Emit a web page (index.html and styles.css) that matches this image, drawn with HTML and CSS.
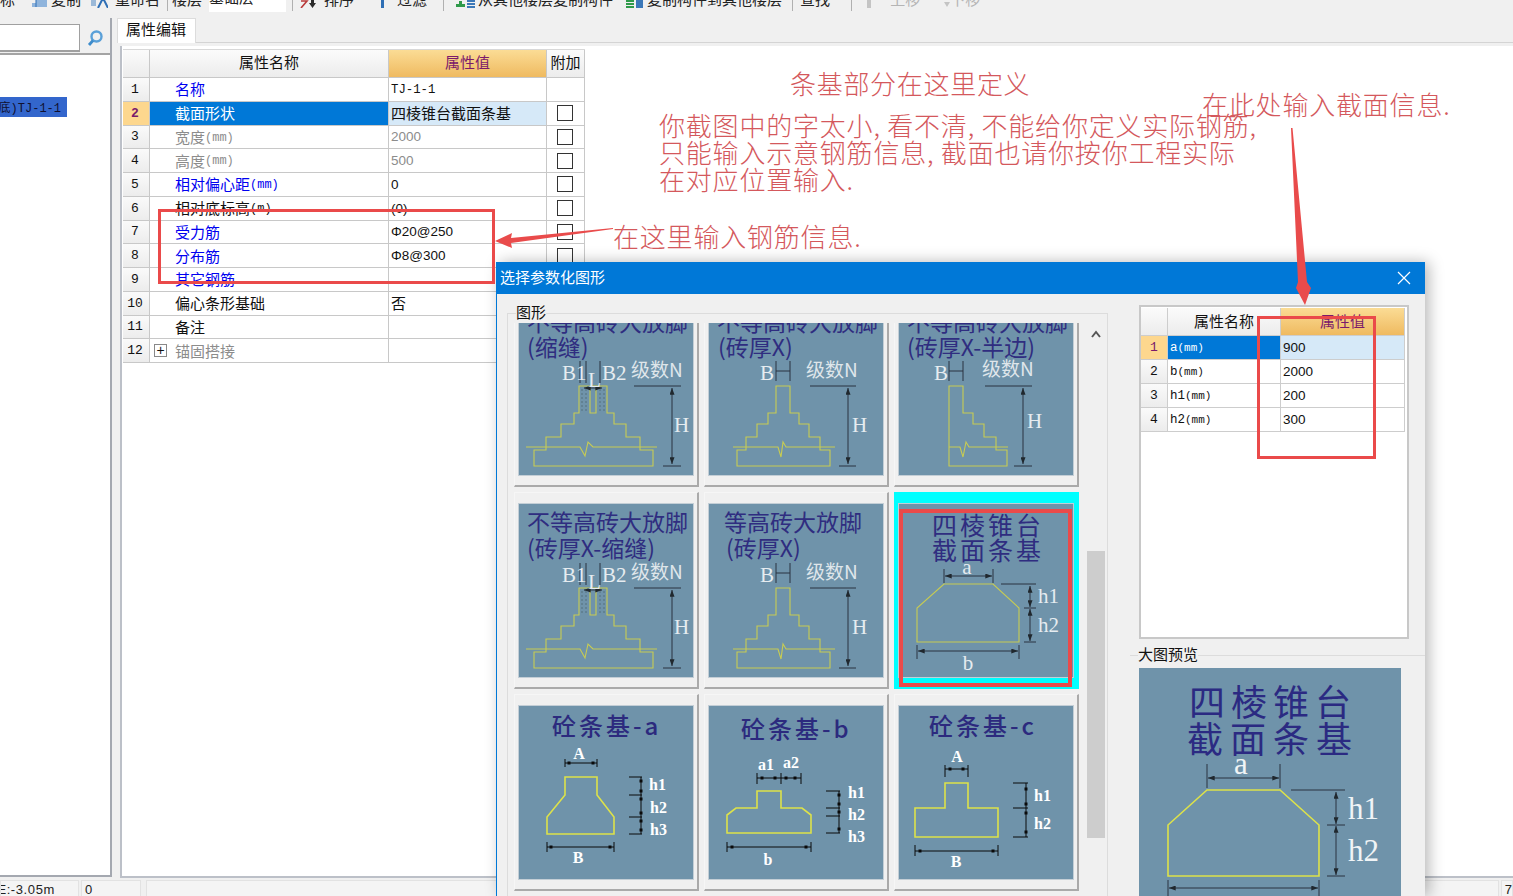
FILE: index.html
```html
<!DOCTYPE html>
<html lang="zh">
<head>
<meta charset="utf-8">
<title>属性编辑</title>
<link rel="stylesheet" href="styles.css">
</head>
<body>
<svg class="defs" width="0" height="0" aria-hidden="true">
  <defs>
    <marker id="ar" viewBox="0 0 8 6" refX="8" refY="3" markerWidth="7" markerHeight="5" orient="auto-start-reverse"><path d="M0 0L8 3L0 6Z" fill="#20282e"/></marker>
    <g id="stairs-a">
      <path class="ln" d="M16 149H28V136H43V123H56V112H61V85H89V112H96V123H108V136H122V149H135V165H16Z"/>
      <path class="ln" d="M8 146H62L67 155L70 141L75 146H139"/>
      <path class="ln" d="M72 85V112H78V85"/>
      <path class="dash" d="M64 88V112M68 88V112M82 88V112M86 88V112"/>
      <path class="dim" d="M116 85H163M145 165H163"/>
      <path class="dim" marker-start="url(#ar)" marker-end="url(#ar)" d="M154 87V163"/>
      <path class="dim" d="M62 60V82M68 60V82M82 60V82" />
      <path class="dim" marker-start="url(#ar)" marker-end="url(#ar)" d="M66 87H84"/>
    </g>
    <g id="stairs-b">
      <path class="ln" d="M29 149H38V136H49V123H60V112H68V85H82V112H91V123H101V136H112V149H122V165H29Z"/>
      <path class="ln" d="M25 146H70L73 156L75 141L78 146H127"/>
      <path class="dim" d="M102 85H148M131 165H148M68 60V80M82 60V80M68 70H82"/>
      <path class="dim" marker-start="url(#ar)" marker-end="url(#ar)" d="M140 87V163"/>
    </g>
  </defs>
</svg>

<header class="toolbar">
  <div class="tools">
    <span class="tool t1">标</span>
    <span class="tool t2"><svg class="ico i15" viewBox="0 0 15 8"><path d="M0 3H4V0H15V7H0Z" fill="#8fb4dc"/><path d="M4 0V7" stroke="#2f6fb5"/></svg>复制</span>
    <span class="tool t3"><svg class="ico i18" viewBox="0 0 18 8"><path d="M8 8L12 0H14L18 8" fill="none" stroke="#2f6fb5" stroke-width="2"/><path d="M1 0H6V6H1Z" fill="#9bb9d8"/></svg>重命名</span>
    <span class="sep s4"></span>
    <span class="tool t4">楼层</span>
    <span class="tool floor">基础层</span>
    <span class="sep s8"></span>
    <span class="tool t5"><svg class="ico i16" viewBox="0 0 16 8"><path d="M1 1H7L1 8" fill="none" stroke="#b83a3a" stroke-width="1.6"/><path d="M11 0H14V3H16L12.5 8L9 3H11Z" fill="#2b2b2b"/></svg>排序</span>
    <span class="tool t6"><svg class="ico i7" viewBox="0 0 7 8"><path d="M2 0H5V8H2Z" fill="#2f6fb5"/></svg>过滤</span>
    <span class="sep s12"></span>
    <span class="tool t7"><svg class="ico i19" viewBox="0 0 19 8"><path d="M0 4H3V1H6V4H9V7H0Z" fill="#2f9a4a"/><path d="M11 0H19V2H11ZM11 3H19V5H11ZM11 6H19V8H11Z" fill="#3c78b8"/></svg>从其他楼层复制构件</span>
    <span class="tool t8"><svg class="ico i17" viewBox="0 0 17 8"><path d="M0 0H8V2H0ZM0 3H8V5H0ZM0 6H8V8H0Z" fill="#2f9a4a"/><path d="M10 0H17V8H10Z" fill="#3c78b8"/></svg>复制构件到其他楼层</span>
    <span class="sep s7"></span>
    <span class="tool t9">查找</span>
    <span class="sep s12"></span>
    <span class="tool t10"><svg class="ico i10" viewBox="0 0 10 8"><path d="M3 0H7V8H3Z" fill="#c4c4c4"/></svg>上移</span>
    <span class="tool t11"><svg class="ico i6" viewBox="0 0 6 8"><path d="M0 2H6L3 7Z" fill="#c4c4c4"/></svg>下移</span>
  </div>
</header>

<main class="main">
  <aside class="left">
    <div class="search">
      <div class="search-input"></div>
      <svg class="search-icon" viewBox="0 0 18 18" width="18" height="18"><circle cx="10.5" cy="7.5" r="5" fill="none" stroke="#5aa0d8" stroke-width="2.4"/><path d="M7 11.5L3 16" stroke="#3d8ccc" stroke-width="2.8"/></svg>
    </div>
    <div class="tree"><div class="tree-sel"><span>(底)TJ-1-1</span></div></div>
  </aside>

  <section class="right">
    <div class="tabs"><div class="tab">属性编辑</div></div>
    <div class="panel">
      <div class="grid">
        <div class="c h"></div><div class="c h ctr">属性名称</div><div class="c h active">属性值</div><div class="c h ctr">附加</div>

        <div class="c n">1</div><div class="c name blue">名称</div><div class="c val mono">TJ-1-1</div><div class="c"></div>
        <div class="c n on">2</div><div class="c name sel">截面形状</div><div class="c val selv">四棱锥台截面条基</div><div class="c chk"><i></i></div>
        <div class="c n">3</div><div class="c name gray">宽度<small>(mm)</small></div><div class="c val gray">2000</div><div class="c chk"><i></i></div>
        <div class="c n">4</div><div class="c name gray">高度<small>(mm)</small></div><div class="c val gray">500</div><div class="c chk"><i></i></div>
        <div class="c n">5</div><div class="c name blue">相对偏心距<small>(mm)</small></div><div class="c val">0</div><div class="c chk"><i></i></div>
        <div class="c n">6</div><div class="c name">相对底标高<small>(m)</small></div><div class="c val">(0)</div><div class="c chk"><i></i></div>
        <div class="c n">7</div><div class="c name blue">受力筋</div><div class="c val">Φ20@250</div><div class="c chk"><i></i></div>
        <div class="c n">8</div><div class="c name blue">分布筋</div><div class="c val">Φ8@300</div><div class="c chk"><i></i></div>
        <div class="c n">9</div><div class="c name blue">其它钢筋</div><div class="c val"></div><div class="c chk"><i></i></div>
        <div class="c n">10</div><div class="c name">偏心条形基础</div><div class="c val cj">否</div><div class="c chk"><i></i></div>
        <div class="c n">11</div><div class="c name">备注</div><div class="c val"></div><div class="c"></div>
        <div class="c n">12</div><div class="c name gray exp"><b>+</b>锚固搭接</div><div class="c val"></div><div class="c"></div>
      </div>
    </div>
  </section>
</main>

<footer class="status">
  <div class="st st1"><span>E:-3.05m</span></div>
  <div class="st st2">0</div>
  <div class="st st3"></div>
  <div class="st st4">7</div>
</footer>

<section class="dialog">
  <div class="dlg-title"><span>选择参数化图形</span>
    <svg class="close" viewBox="0 0 14 14" width="14" height="14"><path d="M1 1L13 13M13 1L1 13" stroke="#fff" stroke-width="1.2"/></svg>
  </div>
  <div class="dlg-body">
    <div class="dlg-left">
      <div class="group">
        <div class="group-label">图形</div>
        <div class="pane">
          <div class="viewport">
            <div class="thumbs">
              <div class="cell"><svg class="img" viewBox="0 0 176 175">
                <text class="tt" x="9" y="30">不等高砖大放脚</text><text class="tt" x="9" y="55">(缩缝)</text>
                <use href="#stairs-a"/>
                <text class="dt" x="44" y="79">B1</text><text class="dt" x="84" y="79">B2</text><text class="dn" x="113" y="76">级数N</text><text class="dt" x="70" y="86">L</text><text class="dt" x="156" y="131">H</text>
              </svg></div>
              <div class="cell"><svg class="img" viewBox="0 0 176 175">
                <text class="tt" x="9" y="30">不等高砖大放脚</text><text class="tt" x="10" y="55">(砖厚X)</text>
                <use href="#stairs-b"/>
                <text class="dt" x="52" y="79">B</text><text class="dn" x="98" y="76">级数N</text><text class="dt" x="144" y="131">H</text>
              </svg></div>
              <div class="cell"><svg class="img" viewBox="0 0 176 175">
                <text class="tt" x="9" y="30">不等高砖大放脚</text><text class="tt" x="9" y="55">(砖厚X-半边)</text>
                <path class="ln" d="M51 85H65V112H75V123H86V136H98V149H109V165H51Z"/>
                <path class="ln" d="M51 146H62L65 156L68 141L71 146H110"/>
                <path class="dim" d="M87 85H134M116 165H134M51 60V80M65 60V80M51 70H65"/>
                <path class="dim" marker-start="url(#ar)" marker-end="url(#ar)" d="M125 87V163"/>
                <text class="dt" x="36" y="79">B</text><text class="dn" x="84" y="75">级数N</text><text class="dt" x="129" y="127">H</text>
              </svg></div>

              <div class="cell"><svg class="img" viewBox="0 0 176 175">
                <text class="tt" x="9" y="28">不等高砖大放脚</text><text class="tt" x="9" y="54">(砖厚X-缩缝)</text>
                <use href="#stairs-a"/>
                <text class="dt" x="44" y="79">B1</text><text class="dt" x="84" y="79">B2</text><text class="dn" x="113" y="76">级数N</text><text class="dt" x="70" y="86">L</text><text class="dt" x="156" y="131">H</text>
              </svg></div>
              <div class="cell"><svg class="img" viewBox="0 0 176 175">
                <text class="tt" x="16" y="28">等高砖大放脚</text><text class="tt" x="18" y="54">(砖厚X)</text>
                <use href="#stairs-b"/>
                <text class="dt" x="52" y="79">B</text><text class="dn" x="98" y="76">级数N</text><text class="dt" x="144" y="131">H</text>
              </svg></div>
              <div class="cell cell-on"><svg class="img" viewBox="0 0 176 175">
                <text class="tt tt-sp" x="90" y="32">四棱锥台</text><text class="tt tt-sp" x="90" y="57">截面条基</text>
                <path class="ln" d="M46 81H95L121 105V139H19V105Z"/>
                <path class="dim" d="M46 66V80M95 66V80M103 81H138M126 105H138M126 139H138M19 142V156M121 142V156"/>
                <path class="dim" marker-start="url(#ar)" marker-end="url(#ar)" d="M47 73H94"/>
                <path class="dim" marker-start="url(#ar)" marker-end="url(#ar)" d="M20 148H120"/>
                <path class="dim" marker-start="url(#ar)" marker-end="url(#ar)" d="M132 83V104"/>
                <path class="dim" marker-start="url(#ar)" marker-end="url(#ar)" d="M132 106V138"/>
                <text class="dt mid" x="69" y="71">a</text><text class="dt mid" x="70" y="167">b</text><text class="dt" x="140" y="100">h1</text><text class="dt" x="140" y="129">h2</text>
              </svg></div>

              <div class="cell"><svg class="img" viewBox="0 0 176 175">
                <text class="tb" x="34" y="30">砼条基-a</text>
                <path class="ln th" d="M47 72H79V90L96 112V129H29V112L47 90Z"/>
                <path class="k" d="M47 54V62M79 54V62M47 58H79M111 72H124M111 90H124M111 112H124M111 129H124M123 72V129M29 137V147M96 137V147M29 142H96"/>
                <path class="kd" d="M51 58h0M75 58h0M123 76h0M123 86h0M123 94h0M123 108h0M123 116h0M123 125h0M33 142h0M92 142h0"/>
                <text class="bd mid" x="61" y="54">A</text><text class="bd" x="131" y="85">h1</text><text class="bd" x="132" y="108">h2</text><text class="bd" x="132" y="130">h3</text><text class="bd mid" x="60" y="158">B</text>
              </svg></div>
              <div class="cell"><svg class="img" viewBox="0 0 176 175">
                <text class="tb" x="33" y="33">砼条基-b</text>
                <path class="ln th" d="M49 86H73V103H94L103 110V128H19V110L28 103H49Z"/>
                <path class="k" d="M49 68V79M73 68V79M93 68V79M49 73H93M118 86H132M118 103H132M118 111H132M118 128H132M131 86V128M19 137V147M103 137V147M19 142H103"/>
                <path class="kd" d="M54 73h0M67 73h0M78 73h0M87 73h0M131 90h0M131 99h0M131 107h0M131 124h0M24 142h0M98 142h0"/>
                <text class="bd" x="50" y="65">a1</text><text class="bd" x="75" y="63">a2</text><text class="bd" x="140" y="93">h1</text><text class="bd" x="140" y="115">h2</text><text class="bd" x="140" y="137">h3</text><text class="bd mid" x="60" y="160">b</text>
              </svg></div>
              <div class="cell"><svg class="img" viewBox="0 0 176 175">
                <text class="tb" x="31" y="30">砼条基-c</text>
                <path class="ln th" d="M47 78H70V103H100V132H17V103H47Z"/>
                <path class="k" d="M47 60V72M70 60V72M47 64H70M115 78H130M115 103H130M115 132H130M128 78V132M17 140V151M100 140V151M17 146H100"/>
                <path class="kd" d="M52 64h0M65 64h0M128 84h0M128 99h0M128 108h0M128 127h0M22 146h0M95 146h0"/>
                <text class="bd mid" x="59" y="57">A</text><text class="bd" x="136" y="96">h1</text><text class="bd" x="136" y="124">h2</text><text class="bd mid" x="58" y="162">B</text>
              </svg></div>
            </div>
          </div>
          <div class="scroll">
            <svg class="chev" viewBox="0 0 10 8" width="10" height="8"><path d="M1 7L5 2L9 7" fill="none" stroke="#555" stroke-width="2"/></svg>
            <div class="thumb"></div>
          </div>
        </div>
      </div>
    </div>

    <div class="dlg-right">
      <div class="pgrid-wrap">
        <div class="pgrid">
          <div class="pc ph"></div><div class="pc ph pctr">属性名称</div><div class="pc ph pactive">属性值</div>
          <div class="pc pn on">1</div><div class="pc pname sel">a<small>(mm)</small></div><div class="pc pval selv">900</div>
          <div class="pc pn">2</div><div class="pc pname">b<small>(mm)</small></div><div class="pc pval">2000</div>
          <div class="pc pn">3</div><div class="pc pname">h1<small>(mm)</small></div><div class="pc pval">200</div>
          <div class="pc pn">4</div><div class="pc pname">h2<small>(mm)</small></div><div class="pc pval">300</div>
        </div>
      </div>
      <div class="preview">
        <div class="group-label lbl2">大图预览</div>
        <svg class="big" viewBox="0 0 262 240">
          <text class="pt" x="134" y="48">四棱锥台</text><text class="pt pt2" x="134" y="85">截面条基</text>
          <path class="ln th" d="M68 122H141L180 157V208H29V157Z"/>
          <path class="dim" d="M68 96V120M141 96V120M152 122H206M188 157H206M188 208H206M29 212V235M180 212V235"/>
          <path class="dim" marker-start="url(#ar)" marker-end="url(#ar)" d="M69 110H140"/>
          <path class="dim" marker-start="url(#ar)" marker-end="url(#ar)" d="M30 220H179"/>
          <path class="dim" marker-start="url(#ar)" marker-end="url(#ar)" d="M197 124V156"/>
          <path class="dim" marker-start="url(#ar)" marker-end="url(#ar)" d="M197 158V207"/>
          <text class="bt mid" x="102" y="106">a</text><text class="bt" x="209" y="151">h1</text><text class="bt" x="209" y="193">h2</text>
        </svg>
      </div>
    </div>
  </div>
</section>

<div class="note n1">条基部分在这里定义</div>
<div class="note n2">你截图中的字太小, 看不清, 不能给你定义实际钢筋,<br>只能输入示意钢筋信息, 截面也请你按你工程实际<br>在对应位置输入.</div>
<div class="note n3">在此处输入截面信息.</div>
<div class="note n4">在这里输入钢筋信息.</div>
<div class="redbox r1"></div>
<div class="redbox r2"></div>
<div class="redbox r3"></div>
<svg class="arrows" viewBox="0 0 1513 896" width="1513" height="896">
  <path d="M613 228L511 238L512 233L495 241L512 248L511 243L613 229Z"/>
  <path d="M1291 128L1292.5 128L1307 282L1311 288L1305 305L1296 288L1298 282Z"/>
</svg>
</body>
</html>
```
FILE: styles.css
```css
* { box-sizing: border-box; }
html, body { margin: 0; padding: 0; }
body {
  width: 1513px; height: 896px; overflow: hidden; position: relative;
  display: flex; flex-direction: column;
  background: #f0f0f0; color: #111;
  font: 15px/1.2 "Noto Sans CJK SC", "Liberation Sans", sans-serif;
}
small { font-size: 12px; font-family: "Liberation Mono", monospace; margin-top: 2px; }
.defs { position: absolute; }

/* toolbar */
.toolbar { height: 18px; flex: none; overflow: hidden; }
.tools { display: flex; align-items: center; height: 24px; margin-top: -13px; font-size: 15px; color: #222; }
.tool { flex: none; line-height: 22px; white-space: nowrap; display: flex; align-items: flex-start; }
.ico { flex: none; margin-top: 12px; height: 8px; }
.i15 { width: 15px; margin-right: 4px; }
.i18 { width: 18px; margin-right: 7px; }
.i16 { width: 16px; margin-right: 8px; }
.i7 { width: 7px; margin-right: 11px; }
.i19 { width: 19px; margin-right: 3px; }
.i17 { width: 17px; margin-right: 4px; }
.i10 { width: 10px; margin-right: 16px; }
.i6 { width: 6px; margin-right: 0; }
.t1 { width: 32px; }
.t2 { margin-right: 9px; }
.t3 { margin-right: 7px; }
.t4 { margin-right: 7px; }
.t5 { margin-right: 25px; }
.t6 { margin-right: 16px; }
.t7 { margin-right: 13px; }
.t8 { margin-right: 10px; }
.t9 { margin-right: 21px; }
.t10 { margin-right: 24px; color: #b4b4b4; }
.t11 { color: #b4b4b4; }
.floor { width: 77px; margin-right: 6px; background: #fff; height: 26px; }
.sep { width: 1px; height: 24px; background: #b0b0b0; flex: none; }
.s4 { margin-right: 4px; }
.s7 { margin-right: 7px; }
.s8 { margin-right: 7px; }
.s12 { margin-right: 12px; }

/* main */
.main { flex: none; height: 860px; display: flex; }
.left {
  width: 112px; flex: none; height: 859px;
  padding-top: 6px; border-right: 2px solid #a4a8b0; border-bottom: 2px solid #a4a8b0;
  display: flex; flex-direction: column;
}
.search { height: 31px; flex: none; display: flex; align-items: flex-start; background: #f0f0f0; border-bottom: 2px solid #a4a4a4; }
.search-input { width: 80px; height: 28px; background: #fff; border: 1px solid #a0a0a0; border-left: 0; border-bottom-width: 2px; }
.search-icon { margin: 5px 0 0 6px; }
.tree { flex: 1; background: #fff; padding-top: 42px; }
.tree-sel {
  width: 67px; height: 20px; background: #3366cc; overflow: hidden; display: flex; justify-content: flex-end;
  align-items: center; padding-right: 6px; font: 12px "Liberation Mono", "Noto Sans CJK SC", monospace; color: #101030; white-space: nowrap;
}
.tree-sel span { flex: none; }

.right { flex: 1; min-width: 0; padding-left: 5px; display: flex; flex-direction: column; }
.tabs { height: 25px; flex: none; border-bottom: 1px solid #d4d4d4; }
.tab {
  width: 79px; height: 25px; background: #fff; border: 1px solid #dcdcdc; border-bottom: 0;
  padding-left: 8px; line-height: 19px; font-size: 15px;
}
.panel {
  height: 832px; margin: 3px 0 0 3px; background: #fff; padding: 3px 0 0 1px;
  border-left: 2px solid #bcc0c8; border-bottom: 2px solid #bcc0c8;
}
.grid {
  display: grid; width: 462px; grid-template-columns: 27px 239px 158px 38px;
  grid-template-rows: 28px; grid-auto-rows: 23.75px; border-top: 1px solid #d8d8d8;
}
.c { border-right: 1px solid #c8c8c8; border-bottom: 1px solid #c8c8c8; display: flex; align-items: center; min-width: 0; white-space: nowrap; overflow: hidden; font-size: 15px; }
.h { background: linear-gradient(#fbfbfb, #ececec); padding-bottom: 4px; }
.ctr { justify-content: center; }
.active { background: linear-gradient(#fbdc95, #efba60); color: #7b1a6b; justify-content: center; }
.n { background: linear-gradient(#fafafa, #ececec); justify-content: center; font: 13px "Liberation Mono", monospace; padding-right: 2px; }
.on { background: #fdd78e; color: #7b1a6b; font-weight: 700; }
.name { padding-left: 25px; }
.val { padding-left: 2px; font: 13.5px "Liberation Sans", "Noto Sans CJK SC", sans-serif; }
.val.selv, .val.cj { font-size: 15px; font-family: "Noto Sans CJK SC", sans-serif; padding-bottom: 2px; }
.val.mono { font: 12.3px "Liberation Mono", monospace; padding-top: 1px; }
.blue { color: #0000f0; }
.gray { color: #8c8c8c; }
.sel { background: #0078d7; color: #fff; }
.selv { background: #d6e9f8; }
.chk { justify-content: center; padding-right: 2px; }
.chk i { width: 16px; height: 16px; border: 1px solid #333; background: #fff; display: block; }
.exp { padding-left: 4px; }
.exp b { width: 13px; height: 13px; border: 1px solid #888; color: #111; font: 400 14px/11px "Liberation Sans", sans-serif; text-align: center; margin-right: 8px; flex: none; }

/* status */
.status { height: 16px; flex: none; margin-top: 2px; display: flex; gap: 2px; overflow: hidden; font: 13px/18px "Liberation Sans", sans-serif; color: #222; }
.st { height: 20px; background: #f4f4f4; border: 1px solid #e2e2e2; white-space: nowrap; }
.st1 { width: 79px; overflow: hidden; display: flex; justify-content: flex-end; padding-right: 23px; }
.st1 span { flex: none; letter-spacing: 0.6px; }
.st2 { width: 60px; padding-left: 3px; }
.st3 { width: 1355px; margin-left: 3px; }
.st4 { flex: 1; padding-left: 3px; }

/* dialog */
.dialog {
  position: absolute; left: 496px; top: 262px; width: 929px; height: 634px; overflow: hidden;
  background: #f0f0f0; border-left: 1px solid #0078d7;
  box-shadow: 4px 0 14px rgba(0,0,0,.28);
  display: flex; flex-direction: column;
}
.dlg-title { height: 32px; flex: none; background: #0078d7; color: #fff; display: flex; align-items: center; justify-content: space-between; padding: 0 14px 3px 3px; font-size: 15px; }
.close { margin-top: 3px; }
.dlg-body { flex: 1; display: flex; min-height: 0; }
.dlg-left { width: 611px; flex: none; padding: 19px 0 0 10px; }
.group { height: 100%; border: 1px solid #dcdcdc; border-bottom: 0; }
.group-label { width: max-content; height: 18px; margin: -11px 0 2px 8px; line-height: 18px; font-size: 15px; background: #f0f0f0; color: #111; }
.pane { display: flex; height: 574px; }
.viewport { width: 571px; margin-left: 6px; height: 100%; overflow: hidden; flex: none; }
.thumbs { display: grid; grid-template-columns: repeat(3, 185px); grid-auto-rows: 197px; gap: 5px; margin-top: -33px; }
.cell { padding: 10px 0 0 3px; background: #f0f0f0; border: 1px solid #f6f6f6; border-right: 2px solid #aaa; border-bottom: 2px solid #aaa; }
.cell-on { background: #00ffff; border-color: #00ffff; }
.img { display: block; width: 176px; height: 175px; background: #6f93aa; outline: 1px solid #c3ced6; outline-offset: -1px; }
.ln { fill: none; stroke: #c8cc52; stroke-width: 1.1; }
.th { stroke: #dde24a; stroke-width: 1.6; }
.dim { fill: none; stroke: #2a3340; stroke-width: 1; }
.dash { fill: none; stroke: #55707f; stroke-width: 1; stroke-dasharray: 2 2; }
.k { fill: none; stroke: #0a0a0a; stroke-width: 1; }
.kd { fill: none; stroke: #0a0a0a; stroke-width: 3; stroke-linecap: square; }
.tt { font: 23px "Noto Sans CJK SC", sans-serif; fill: #2f2d80; }
.tt-sp { font-size: 25px; letter-spacing: 3px; text-anchor: middle; }
.tb { font: 500 24px "Noto Sans CJK SC", sans-serif; letter-spacing: 3px; fill: #2c2a7e; }
.dt { font: 21px "Liberation Serif", serif; fill: #e6ecf0; }
.dn { font: 19px "Noto Sans CJK SC", "Liberation Serif", sans-serif; fill: #dfe6ea; }
.bd { font: 700 16px "Liberation Serif", serif; fill: #fff; }
.mid { text-anchor: middle; }
.scroll { flex: none; width: 18px; margin-left: 2px; display: flex; flex-direction: column; align-items: center; }
.chev { margin-top: 7px; flex: none; }
.thumb { width: 18px; height: 287px; margin-top: 213px; background: #cdcdcd; flex: none; }

.dlg-right { flex: 1; min-width: 0; padding: 11px 0 0 22px; }
.pgrid-wrap { width: 270px; height: 334px; margin-left: 9px; background: #fff; border: 2px solid #c8c8c8; padding: 1px 0 0 0; }
.pgrid { display: grid; width: 264px; grid-template-columns: 27px 113px 124px; grid-template-rows: 28px; grid-auto-rows: 24px; }
.pc { border-right: 1px solid #cdcdcd; border-bottom: 1px solid #cdcdcd; display: flex; align-items: center; min-width: 0; white-space: nowrap; overflow: hidden; }
.ph { background: linear-gradient(#fbfbfb, #ececec); font-size: 15px; padding-bottom: 2px; }
.pctr { justify-content: center; }
.pactive { background: linear-gradient(#fbdc95, #efba60); color: #7b1a6b; justify-content: center; font-size: 15px; }
.pn { background: linear-gradient(#fafafa, #ececec); justify-content: center; font: 13px "Liberation Mono", monospace; }
.pn.on { background: #fdd78e; color: #7b1a6b; }
.pname { padding-left: 2px; font: 12.5px "Liberation Mono", monospace; }
.pname small { font-size: 11px; margin-top: 0; }
.pval { padding-left: 2px; font: 13.5px "Liberation Sans", sans-serif; }

.preview { margin-top: 16px; border-top: 1px solid #dcdcdc; }
.lbl2 { margin-left: 8px; }
.big { display: block; width: 262px; height: 240px; margin: 5px 0 0 9px; background: #6f93aa; }
.pt { font: 36px "Noto Sans CJK SC", sans-serif; letter-spacing: 6px; text-anchor: middle; fill: #2b2a82; }
.pt2 { letter-spacing: 7px; }
.bt { font: 31px "Liberation Serif", serif; fill: #f0f4f6; }

/* annotations */
.note { position: absolute; font-family: "Noto Sans CJK SC", sans-serif; font-weight: 300; color: #d4585c; font-size: 26px; line-height: 27px; white-space: nowrap; letter-spacing: .8px; }
.n1 { left: 790px; top: 69px; letter-spacing: .7px; }
.n2 { left: 659px; top: 111px; }
.n3 { left: 1202px; top: 90px; }
.n4 { left: 613px; top: 222px; }
.redbox { position: absolute; border: 3px solid #ea4a4a; }
.r1 { left: 158px; top: 209px; width: 337px; height: 75px; }
.r2 { left: 1257px; top: 316px; width: 119px; height: 143px; }
.r3 { left: 899px; top: 509px; width: 173px; height: 178px; border-width: 4px; }
.arrows { position: absolute; left: 0; top: 0; pointer-events: none; fill: #e94b4b; }
```
